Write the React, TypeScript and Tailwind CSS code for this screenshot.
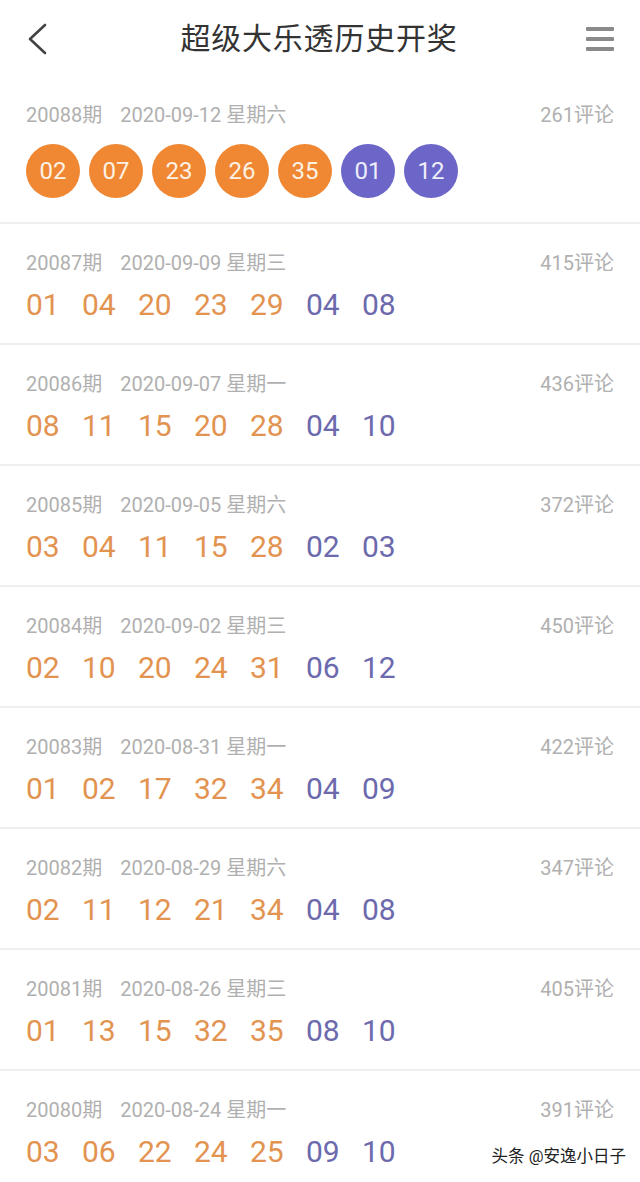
import React from 'react';

interface Draw {
  issue: string;
  date: string;
  week: string;
  comments: number;
  front: string[];
  back: string[];
}

const draws: Draw[] = [
  { issue: '20088', date: '2020-09-12', week: '星期六', comments: 261, front: ['02', '07', '23', '26', '35'], back: ['01', '12'] },
  { issue: '20087', date: '2020-09-09', week: '星期三', comments: 415, front: ['01', '04', '20', '23', '29'], back: ['04', '08'] },
  { issue: '20086', date: '2020-09-07', week: '星期一', comments: 436, front: ['08', '11', '15', '20', '28'], back: ['04', '10'] },
  { issue: '20085', date: '2020-09-05', week: '星期六', comments: 372, front: ['03', '04', '11', '15', '28'], back: ['02', '03'] },
  { issue: '20084', date: '2020-09-02', week: '星期三', comments: 450, front: ['02', '10', '20', '24', '31'], back: ['06', '12'] },
  { issue: '20083', date: '2020-08-31', week: '星期一', comments: 422, front: ['01', '02', '17', '32', '34'], back: ['04', '09'] },
  { issue: '20082', date: '2020-08-29', week: '星期六', comments: 347, front: ['02', '11', '12', '21', '34'], back: ['04', '08'] },
  { issue: '20081', date: '2020-08-26', week: '星期三', comments: 405, front: ['01', '13', '15', '32', '35'], back: ['08', '10'] },
  { issue: '20080', date: '2020-08-24', week: '星期一', comments: 391, front: ['03', '06', '22', '24', '25'], back: ['09', '10'] },
];

const font = { fontFamily: 'Roboto, "Noto Sans CJK SC", sans-serif' };

const InfoLine: React.FC<{ d: Draw }> = ({ d }) => (
  <div className="flex items-center justify-between h-[24px] text-[20px] text-[#b0b0b0]">
    <span>
      {d.issue}期<span className="ml-[18px]">{d.date} {d.week}</span>
    </span>
    <span>{d.comments}评论</span>
  </div>
);

const LatestDraw: React.FC<{ d: Draw }> = ({ d }) => (
  <div className="pl-[26px] pr-[26px] pt-[27px] pb-[24px]">
    <InfoLine d={d} />
    <div className="flex gap-[9px] mt-[17px]">
      {d.front.map((n, i) => (
        <div key={'f' + i} className="w-[54px] h-[54px] rounded-full bg-[#ef8733] text-[#fdf1e4] text-[24px] flex items-center justify-center">
          {n}
        </div>
      ))}
      {d.back.map((n, i) => (
        <div key={'b' + i} className="w-[54px] h-[54px] rounded-full bg-[#6b66c8] text-[#eeeefa] text-[24px] flex items-center justify-center">
          {n}
        </div>
      ))}
    </div>
  </div>
);

const DrawRow: React.FC<{ d: Draw }> = ({ d }) => (
  <div className="pl-[26px] pr-[26px] pt-[27px] pb-[21px]">
    <InfoLine d={d} />
    <div className="flex mt-[11px] h-[36px] items-center text-[30px]">
      {d.front.map((n, i) => (
        <span key={'f' + i} className="w-[56px] text-[#e39350]">{n}</span>
      ))}
      {d.back.map((n, i) => (
        <span key={'b' + i} className="w-[56px] text-[#6c69ad]">{n}</span>
      ))}
    </div>
  </div>
);

export default function App() {
  const [first, ...rest] = draws;
  return (
    <div className="relative w-[640px] h-[1182px] overflow-hidden bg-white" style={font}>
      <div className="flex items-center justify-between h-[76px] px-[26px]">
        <svg width="22" height="32" viewBox="0 0 22 32" className="mt-[2px]">
          <path d="M19 2 L4 16 L19 30" fill="none" stroke="#444" strokeWidth="2.6" strokeLinecap="round" strokeLinejoin="round" />
        </svg>
        <h1 className="text-[30px] text-[#333] tracking-[0.8px] ml-[4px]">超级大乐透历史开奖</h1>
        <div className="flex flex-col gap-[6px] w-[28px] mt-[2px]">
          <div className="h-[4px] bg-[#8a8a8a] rounded-[1px]" />
          <div className="h-[4px] bg-[#8a8a8a] rounded-[1px]" />
          <div className="h-[4px] bg-[#8a8a8a] rounded-[1px]" />
        </div>
      </div>
      <LatestDraw d={first} />
      {rest.map((d) => (
        <div key={d.issue}>
          <div className="h-[2px] bg-[#efefef]" />
          <DrawRow d={d} />
        </div>
      ))}
      <div
        className="absolute right-[14px] bottom-[12px] text-[16.5px] text-[#222]"
        style={{ textShadow: '0 0 2px #fff, 0 0 2px #fff' }}
      >
        头条 @安逸小日子
      </div>
    </div>
  );
}
